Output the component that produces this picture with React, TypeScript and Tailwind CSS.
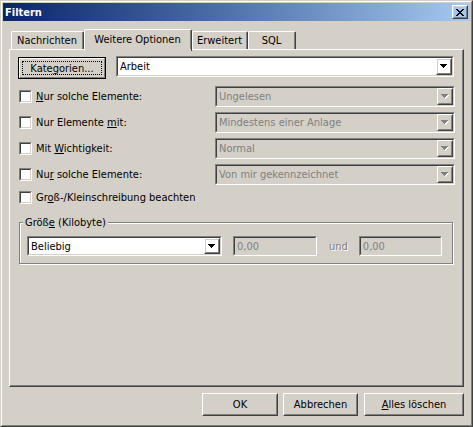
import React from 'react'

// pixel arrow for the combo buttons
function Arrow({ disabled = false }: { disabled?: boolean }) {
  const rows = [
    [0, 0, 7],
    [1, 1, 5],
    [2, 2, 3],
    [3, 3, 1],
  ]
  return (
    <svg width="8" height="5" viewBox="0 0 8 5" shapeRendering="crispEdges">
      {disabled &&
        rows.map(([x, y, w]) => <rect key={'s' + y} x={x + 1} y={y + 1} width={w} height={1} fill="#ffffff" />)}
      {rows.map(([x, y, w]) => (
        <rect key={y} x={x} y={y} width={w} height={1} fill={disabled ? '#808080' : '#000000'} />
      ))}
    </svg>
  )
}

function Raised({ className = '', children }: { className?: string; children?: React.ReactNode }) {
  return (
    <div className={`border border-t-white border-l-white border-r-[#404040] border-b-[#404040] ${className}`}>
      <div className="flex h-full w-full items-center justify-center border border-t-[#d4d0c8] border-l-[#d4d0c8] border-r-[#808080] border-b-[#808080]">
        {children}
      </div>
    </div>
  )
}

function Sunken({ className = '', inner = '', children }: { className?: string; inner?: string; children?: React.ReactNode }) {
  return (
    <div className={`flex border border-t-[#808080] border-l-[#808080] border-r-white border-b-white ${className}`}>
      <div className={`flex flex-1 items-center border border-t-[#404040] border-l-[#404040] border-r-[#d4d0c8] border-b-[#d4d0c8] ${inner}`}>
        {children}
      </div>
    </div>
  )
}

function Combo({ className, value, disabled = false }: { className: string; value: string; disabled?: boolean }) {
  return (
    <Sunken className={className} inner={disabled ? 'bg-[#d4d0c8] text-[#808080]' : 'bg-white text-black'}>
      <span className="flex-1 truncate pl-[2px]">{value}</span>
      <Raised className="h-full w-[16px]">
        <Arrow disabled={disabled} />
      </Raised>
    </Sunken>
  )
}

function Checkbox() {
  return <Sunken className="ml-[1px] h-[13px] w-[13px]" inner="bg-white" />
}

function CheckRow({ label, value }: { label: React.ReactNode; value?: string }) {
  return (
    <div className="flex h-[21px] items-center">
      <Checkbox />
      <span className="ml-[4px]">{label}</span>
      {value && <Combo className="ml-auto mr-[1px] h-[21px] w-[240px]" value={value} disabled />}
    </div>
  )
}

function Tab({ label, className, selected = false }: { label: string; className: string; selected?: boolean }) {
  return (
    <div
      className={`flex items-center justify-center rounded-tl-[2px] rounded-tr-[2px] border-t border-l border-r border-t-white border-l-white border-r-[#404040] bg-[#d4d0c8] ${
        selected ? 'relative z-10 -mb-[2px] h-[22px] pb-[2px]' : 'h-[18px]'
      } ${className}`}
    >
      <div className="flex h-full w-full items-center justify-center border-r border-r-[#808080]">{label}</div>
    </div>
  )
}

function Button({ className, children }: { className: string; children: React.ReactNode }) {
  return <Raised className={`h-[23px] ${className}`}>{children}</Raised>
}

export default function App() {
  return (
    <div className="h-[427px] w-[473px] font-['DejaVu_Sans_Condensed','DejaVu_Sans',sans-serif] text-[11px] leading-[13px] text-black">
      <div className="h-full w-full border border-t-[#d4d0c8] border-l-[#d4d0c8] border-r-[#404040] border-b-[#404040]">
        <div className="flex h-full w-full flex-col border border-t-white border-l-white border-r-[#808080] border-b-[#808080] bg-[#d4d0c8] p-[1px]">
          {/* title bar */}
          <div className="flex h-[18px] items-center bg-gradient-to-r from-[#0a246a] to-[#a6caf0] pl-[2px] pr-[2px]">
            <span className="font-bold text-white">Filtern</span>
            <Raised className="ml-auto h-[14px] w-[16px]">
              <svg width="8" height="7" viewBox="0 0 8 7" shapeRendering="crispEdges">
                {[0, 1, 2, 3, 4, 5, 6].map((i) => (
                  <React.Fragment key={i}>
                    <rect x={i} y={i} width={2} height={1} fill="#000" />
                    <rect x={6 - i} y={i} width={2} height={1} fill="#000" />
                  </React.Fragment>
                ))}
              </svg>
            </Raised>
          </div>

          {/* tabs */}
          <div className="ml-[8px] mt-[8px] flex items-end">
            <Tab label="Nachrichten" className="w-[73px]" />
            <Tab label="Weitere Optionen" className="w-[108px]" selected />
            <Tab label="Erweitert" className="w-[56px]" />
            <Tab label="SQL" className="w-[48px]" />
          </div>

          <div className="ml-[6px] h-[338px] w-[455px] border border-t-white border-l-white border-r-[#404040] border-b-[#404040]">
            <div className="flex h-full w-full flex-col border-r border-b border-r-[#808080] border-b-[#808080] pl-[8px] pr-[6px] pt-[6px]">
              <div className="flex items-start">
                <div className="mt-[1px] h-[22px] w-[88px] border border-black">
                  <div className="flex h-full w-full items-center justify-center border border-t-white border-l-white border-r-[#808080] border-b-[#808080] p-[2px]">
                    <div className="flex h-full w-full items-center justify-center border border-dotted border-black">
                      Kate<span className="underline">g</span>orien...
                    </div>
                  </div>
                </div>
                <Combo className="ml-[10px] h-[21px] w-[338px]" value="Arbeit" />
              </div>

              <div className="mt-[7px] flex flex-col gap-[5px]">
                <CheckRow
                  label={
                    <>
                      <span className="underline">N</span>ur solche Elemente:
                    </>
                  }
                  value="Ungelesen"
                />
                <CheckRow
                  label={
                    <>
                      Nur Elemente <span className="underline">m</span>it:
                    </>
                  }
                  value="Mindestens einer Anlage"
                />
                <CheckRow
                  label={
                    <>
                      Mit <span className="underline">W</span>ichtigkeit:
                    </>
                  }
                  value="Normal"
                />
                <CheckRow
                  label={
                    <>
                      Nu<span className="underline">r</span> solche Elemente:
                    </>
                  }
                  value="Von mir gekennzeichnet"
                />
              </div>
              <div className="mt-[2px]">
                <CheckRow
                  label={
                    <>
                      Gr<span className="underline">o</span>ß-/Kleinschreibung beachten
                    </>
                  }
                />
              </div>

              {/* group box */}
              <div className="relative ml-[1px] mt-[14px] h-[42px] w-[434px] border border-[#808080] shadow-[inset_1px_1px_0_#ffffff,1px_1px_0_#ffffff]">
                <span className="absolute -top-[7px] left-[3px] bg-[#d4d0c8] px-[2px]">
                  Größ<span className="underline">e</span> (Kilobyte)
                </span>
                <div className="flex items-center pl-[7px] pt-[13px]">
                  <Combo className="h-[20px] w-[195px]" value="Beliebig" />
                  <Sunken className="ml-[11px] h-[20px] w-[84px]" inner="bg-[#d4d0c8] text-[#808080]">
                    <span className="pl-[2px]">0,00</span>
                  </Sunken>
                  <span className="ml-[12px] text-[#808080] [text-shadow:1px_1px_0_#ffffff]">und</span>
                  <Sunken className="ml-[11px] h-[20px] w-[83px]" inner="bg-[#d4d0c8] text-[#808080]">
                    <span className="pl-[2px]">0,00</span>
                  </Sunken>
                </div>
              </div>
            </div>
          </div>

          {/* dialog buttons */}
          <div className="mt-[6px] flex justify-end pr-[6px]">
            <Button className="w-[76px]">OK</Button>
            <Button className="ml-[5px] w-[75px]">Abbrechen</Button>
            <Button className="ml-[6px] w-[100px]">
              <span>
                <span className="underline">A</span>lles löschen
              </span>
            </Button>
          </div>
        </div>
      </div>
    </div>
  )
}
